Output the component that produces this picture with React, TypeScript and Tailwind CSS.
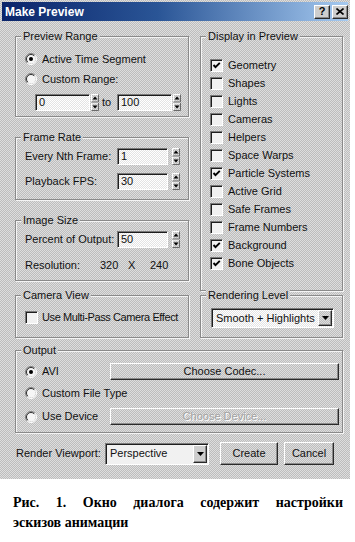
import React from 'react';

// classic dithered dialog surfaces
const DITHER = 'bg-[repeating-conic-gradient(#bdbdbd_0_25%,#dedede_0_50%)] bg-[length:2px_2px] bg-fixed';
const FIELD = 'bg-[repeating-conic-gradient(#e3e3e3_0_25%,#ffffff_0_50%)] bg-[length:2px_2px] bg-fixed';
const SUNKEN = 'border border-t-[#7a7a7a] border-l-[#7a7a7a] border-b-white border-r-white shadow-[inset_1px_1px_0_#1e1e1e]';
const RAISED = 'border border-t-white border-l-white border-b-[#2a2a2a] border-r-[#2a2a2a] shadow-[inset_-1px_-1px_0_#8a8a8a]';

const Group: React.FC<{ title: string; className?: string; children?: React.ReactNode }> = ({ title, className = '', children }) => (
  <div className={`relative border border-[#8a8a8a] shadow-[inset_1px_1px_0_#f4f4f4,1px_1px_0_#f4f4f4] ${className}`}>
    <span className={`absolute -top-[8px] left-[5px] px-[2px] leading-[14px] ${DITHER}`}>{title}</span>
    {children}
  </div>
);

const Radio: React.FC<{ checked?: boolean }> = ({ checked }) => (
  <svg width="12" height="12" viewBox="0 0 12 12" className="shrink-0">
    <circle cx="6" cy="6" r="4.5" fill="#f6f6f6" />
    <path d="M2.1 9.9 A5.5 5.5 0 0 1 9.9 2.1" fill="none" stroke="#808080" strokeWidth="1" />
    <path d="M2.8 9.2 A4.5 4.5 0 0 1 9.2 2.8" fill="none" stroke="#303030" strokeWidth="1" />
    <path d="M9.9 2.1 A5.5 5.5 0 0 1 2.1 9.9" fill="none" stroke="#ffffff" strokeWidth="1" />
    {checked && <circle cx="6" cy="6" r="2" fill="#000" />}
  </svg>
);

const Check: React.FC<{ checked?: boolean }> = ({ checked }) => (
  <div className={`w-[13px] h-[13px] shrink-0 ${SUNKEN} ${FIELD} flex items-center justify-center`}>
    {checked && (
      <svg width="9" height="9" viewBox="0 0 9 9">
        <path d="M1.5 4 L3.5 6.2 L7.8 1.8" fill="none" stroke="#000" strokeWidth="1.9" />
      </svg>
    )}
  </div>
);

const Spinner: React.FC<{ className?: string }> = ({ className = '' }) => (
  <svg width="8" height="17" viewBox="0 0 8 17" className={`shrink-0 ${className}`}>
    <path d="M0.5 8 V0.5 H7.5" fill="none" stroke="#fff" />
    <path d="M0.5 16.5 V9 H7.5" fill="none" stroke="#fff" />
    <path d="M7.5 0.5 V8 H0.5" fill="none" stroke="#6a6a6a" />
    <path d="M7.5 9 V16.5 H0.5" fill="none" stroke="#6a6a6a" />
    <path d="M4 2.5 L6.5 5.5 H1.5 Z" fill="#000" />
    <path d="M4 14.5 L6.5 11.5 H1.5 Z" fill="#000" />
  </svg>
);

const Field: React.FC<{ value: string; className?: string }> = ({ value, className = '' }) => (
  <div className={`h-[17px] ${SUNKEN} ${FIELD} flex items-center pl-[3px] ${className}`}>{value}</div>
);

const Dropdown: React.FC<{ value: string; className?: string }> = ({ value, className = '' }) => (
  <div className={`${SUNKEN} ${FIELD} flex items-center pl-[4px] pr-[1px] py-[1px] ${className}`}>
    <span className="flex-1 whitespace-nowrap">{value}</span>
    <div className={`w-[14px] h-full ${RAISED} ${DITHER} flex items-center justify-center`}>
      <svg width="7" height="4" viewBox="0 0 7 4">
        <path d="M0 0 H7 L3.5 4 Z" fill="#000" />
      </svg>
    </div>
  </div>
);

const Button: React.FC<{ label: string; disabled?: boolean; className?: string }> = ({ label, disabled, className = '' }) => (
  <div
    className={`${RAISED} ${DITHER} flex items-center justify-center ${
      disabled ? 'text-[#a3a3a3] [text-shadow:1px_1px_0_#fff]' : ''
    } ${className}`}
  >
    {label}
  </div>
);

const RadioRow: React.FC<{ label: string; checked?: boolean; className?: string }> = ({ label, checked, className = '' }) => (
  <div className={`h-[16px] flex items-center ${className}`}>
    <Radio checked={checked} />
    <span className="ml-[5px]">{label}</span>
  </div>
);

const DISPLAY = [
  { label: 'Geometry', on: true },
  { label: 'Shapes', on: false },
  { label: 'Lights', on: false },
  { label: 'Cameras', on: false },
  { label: 'Helpers', on: false },
  { label: 'Space Warps', on: false },
  { label: 'Particle Systems', on: true },
  { label: 'Active Grid', on: false },
  { label: 'Safe Frames', on: false },
  { label: 'Frame Numbers', on: false },
  { label: 'Background', on: true },
  { label: 'Bone Objects', on: true },
];

export default function App() {
  return (
    <div className="w-[355px] h-[542px] bg-white overflow-hidden font-['Liberation_Sans',Arial,sans-serif] text-[11px] leading-[13px] text-[#111]">
      <div className={`w-[350px] h-[479px] ${DITHER} flex flex-col`}>
        {/* title bar */}
        <div className="mx-[2px] mt-[2px] h-[19px] bg-[linear-gradient(to_right,#0a246a,#2a5596_45%,#a6caf0)] flex items-center pl-[3px]">
          <span className="text-white font-bold text-[12px] leading-[14px]">Make Preview</span>
          <div className="ml-auto flex gap-[2px]">
            <div className={`w-[16px] h-[14px] ${RAISED} ${DITHER} flex items-center justify-center font-bold text-[11px] text-black`}>?</div>
            <div className={`w-[16px] h-[14px] ${RAISED} ${DITHER} flex items-center justify-center`}>
              <svg width="8" height="7" viewBox="0 0 8 7">
                <path d="M0.5 0.5 L7.5 6.5 M7.5 0.5 L0.5 6.5" stroke="#000" strokeWidth="1.6" />
              </svg>
            </div>
          </div>
        </div>

        <div className="pl-[15px] pr-[7px] pt-[15px] flex flex-col">
          <div className="flex gap-[11px]">
            {/* left column */}
            <div className="w-[174px] flex flex-col">
              <Group title="Preview Range" className="h-[81px] pt-[14px] pl-[9px]">
                <RadioRow checked label="Active Time Segment" />
                <RadioRow label="Custom Range:" className="mt-[4px]" />
                <div className="mt-[7px] ml-[10px] flex items-center">
                  <Field value="0" className="w-[55px]" />
                  <Spinner className="ml-[1px]" />
                  <span className="ml-[3px] w-[15px]">to</span>
                  <Field value="100" className="w-[55px]" />
                  <Spinner className="ml-[1px]" />
                </div>
              </Group>

              <Group title="Frame Rate" className="mt-[20px] h-[63px] pt-[10px] pl-[9px]">
                <div className="h-[17px] flex items-center">
                  <span className="w-[92px]">Every Nth Frame:</span>
                  <Field value="1" className="w-[51px]" />
                  <Spinner className="ml-[4px]" />
                </div>
                <div className="mt-[8px] h-[17px] flex items-center">
                  <span className="w-[92px]">Playback FPS:</span>
                  <Field value="30" className="w-[51px]" />
                  <Spinner className="ml-[4px]" />
                </div>
              </Group>

              <Group title="Image Size" className="mt-[20px] h-[61px] pt-[10px] pl-[9px]">
                <div className="h-[17px] flex items-center">
                  <span className="w-[92px]">Percent of Output:</span>
                  <Field value="50" className="w-[51px]" />
                  <Spinner className="ml-[4px]" />
                </div>
                <div className="mt-[9px] h-[16px] flex items-center">
                  <span className="w-[75px]">Resolution:</span>
                  <span className="w-[28px]">320</span>
                  <span className="w-[22px]">X</span>
                  <span>240</span>
                </div>
              </Group>

              <Group title="Camera View" className="mt-[14px] h-[43px] pt-[13px] pl-[9px]">
                <div className="h-[16px] flex items-center">
                  <Check />
                  <span className="ml-[4px] whitespace-nowrap tracking-[-0.4px]">Use Multi-Pass Camera Effect</span>
                </div>
              </Group>
            </div>

            {/* right column */}
            <div className="w-[143px] flex flex-col">
              <Group title="Display in Preview" className="h-[255px] pt-[19px] pl-[9px]">
                {DISPLAY.map((d) => (
                  <div key={d.label} className="h-[18px] flex items-center">
                    <Check checked={d.on} />
                    <span className="ml-[5px]">{d.label}</span>
                  </div>
                ))}
              </Group>
              <Group title="Rendering Level" className="mt-[4px] h-[43px] pt-[12px] pl-[10px]">
                <Dropdown value="Smooth + Highlights" className="w-[123px] h-[20px]" />
              </Group>
            </div>
          </div>

          <Group title="Output" className="mt-[12px] h-[83px] pt-[12px] pl-[9px] pr-[3px]">
            <div className="h-[17px] flex items-center">
              <div className="w-[85px] flex items-center">
                <Radio checked />
                <span className="ml-[5px]">AVI</span>
              </div>
              <Button label="Choose Codec..." className="flex-1 h-[17px]" />
            </div>
            <RadioRow label="Custom File Type" className="mt-[5px]" />
            <div className="mt-[7px] h-[17px] flex items-center">
              <div className="w-[85px] flex items-center">
                <Radio />
                <span className="ml-[5px]">Use Device</span>
              </div>
              <Button label="Choose Device..." disabled className="flex-1 h-[17px]" />
            </div>
          </Group>

          <div className="mt-[9px] h-[23px] flex items-center pl-[1px]">
            <span className="w-[89px]">Render Viewport:</span>
            <Dropdown value="Perspective" className="w-[104px] h-[22px]" />
            <Button label="Create" className="ml-[11px] w-[58px] h-[23px]" />
            <Button label="Cancel" className="ml-[6px] w-[50px] h-[23px]" />
          </div>
        </div>
      </div>

      <div className="ml-[13px] mt-[14px] w-[330px] font-['Liberation_Serif','Times_New_Roman',serif] font-bold text-[14px] leading-[20px] text-black">
        <div className="text-justify [text-align-last:justify]">Рис. 1. Окно диалога содержит настройки</div>
        <div>эскизов анимации</div>
      </div>
    </div>
  );
}
